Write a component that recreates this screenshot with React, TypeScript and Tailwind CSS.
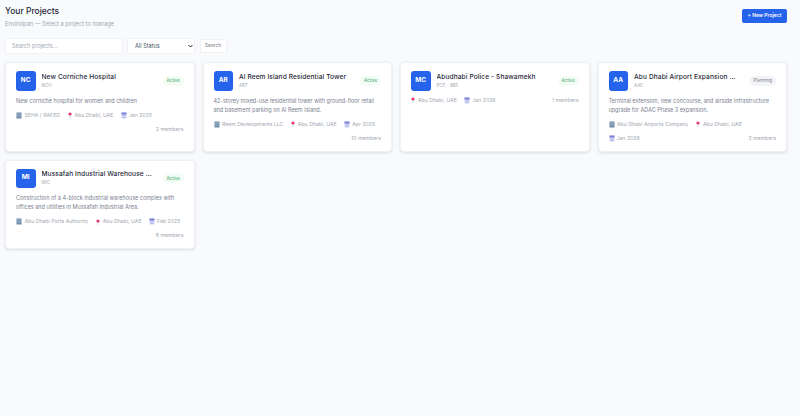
const font = "font-['Inter',sans-serif]";

const BuildingIcon = () => (
  <svg width="6" height="7" viewBox="0 0 12 14" className="shrink-0">
    <rect x="1" y="1" width="10" height="12" fill="#6f8cab" />
    <rect x="3" y="3" width="2" height="2" fill="#c6d9ea" />
    <rect x="7" y="3" width="2" height="2" fill="#c6d9ea" />
    <rect x="3" y="7" width="2" height="2" fill="#c6d9ea" />
    <rect x="7" y="7" width="2" height="2" fill="#c6d9ea" />
  </svg>
);

const PinIcon = () => (
  <svg width="4" height="6" viewBox="0 0 10 14" className="shrink-0">
    <circle cx="5" cy="4.5" r="4" fill="#e8336f" />
    <rect x="4.2" y="7" width="1.6" height="7" fill="#b4bac4" />
  </svg>
);

const CalendarIcon = () => (
  <svg width="6" height="7" viewBox="0 0 12 14" className="shrink-0">
    <rect x="1" y="1" width="10" height="12" fill="#d3d5f3" />
    <rect x="1" y="1" width="10" height="4" fill="#7a80d8" />
    <rect x="3" y="7" width="6" height="1" fill="#9a9fe0" />
    <rect x="3" y="10" width="6" height="1" fill="#9a9fe0" />
  </svg>
);

type Project = {
  initials: string;
  name: string;
  code: string;
  status: string;
  description?: string;
  client?: string;
  date: string;
  members: string;
};

const projects: Project[] = [
  {
    initials: "NC",
    name: "New Corniche Hospital",
    code: "NCH",
    status: "Active",
    description: "New corniche hospital for women and children",
    client: "SEHA / RAFED",
    date: "Jan 2025",
    members: "2 members",
  },
  {
    initials: "AR",
    name: "Al Reem Island Residential Tower",
    code: "ART",
    status: "Active",
    description:
      "42-storey mixed-use residential tower with ground-floor retail and basement parking on Al Reem Island.",
    client: "Reem Developments LLC",
    date: "Apr 2025",
    members: "10 members",
  },
  {
    initials: "MC",
    name: "Abudhabi Police - Shawamekh",
    code: "PCE - 885",
    status: "Active",
    date: "Jan 2026",
    members: "1 members",
  },
  {
    initials: "AA",
    name: "Abu Dhabi Airport Expansion Phase 3",
    code: "AAE",
    status: "Planning",
    description:
      "Terminal extension, new concourse, and airside infrastructure upgrade for ADAC Phase 3 expansion.",
    client: "Abu Dhabi Airports Company",
    date: "Jan 2026",
    members: "3 members",
  },
  {
    initials: "MI",
    name: "Mussafah Industrial Warehouse Complex",
    code: "MIC",
    status: "Active",
    description:
      "Construction of a 4-block industrial warehouse complex with offices and utilities in Mussafah Industrial Area.",
    client: "Abu Dhabi Ports Authority",
    date: "Feb 2025",
    members: "8 members",
  },
];

const ProjectCard = ({ project }: { project: Project }) => (
  <div className="flex flex-col rounded-[4px] border border-[#f0f1f4] bg-white px-[10px] pt-[8px] pb-[8px] shadow-[0_1px_3px_rgba(0,0,0,0.12)]">
    <div className="flex items-center gap-[6px]">
      <div className="flex h-[19.5px] w-[19.5px] shrink-0 items-center justify-center rounded-[3px] bg-[#2563eb] text-[6.5px] font-bold text-white">
        {project.initials}
      </div>
      <div className="min-w-0 flex-1">
        <div className="truncate text-[6.6px] leading-[10px] font-medium tracking-[0.1px] text-[#1f2937]">
          {project.name}
        </div>
        <div className="text-[4.5px] leading-[8px] text-[#a3a9b3]">{project.code}</div>
      </div>
      <span
        className={
          project.status === "Active"
            ? "ml-[4px] shrink-0 rounded-full bg-[#f3fdf6] px-[3.5px] py-[1.5px] text-[4.6px] leading-[7px] text-[#3aa866]"
            : "ml-[4px] shrink-0 rounded-full bg-[#f3f4f6] px-[4px] py-[1.5px] text-[4.6px] leading-[7px] text-[#7b8290]"
        }
      >
        {project.status}
      </span>
    </div>
    {project.description && (
      <p className="mt-[6px] text-[5.5px] leading-[9px] text-[#7b8290]">{project.description}</p>
    )}
    <div className="mt-[5px] flex flex-wrap items-center gap-x-[7.5px] gap-y-[5px] text-[5.2px] leading-[9px] text-[#a3a9b3]">
      {project.client && (
        <span className="flex items-center gap-[2.5px]">
          <BuildingIcon />
          {project.client}
        </span>
      )}
      <span className="flex items-center gap-[3px]">
        <PinIcon />
        Abu Dhabi, UAE
      </span>
      <span className="flex items-center gap-[2px]">
        <CalendarIcon />
        {project.date}
      </span>
      <span className="ml-auto">{project.members}</span>
    </div>
  </div>
);

export default function App() {
  return (
    <div className={`${font} min-h-[416px] w-[800px] bg-[#f8fafc] pt-[5px] pr-[13px] pl-[5px]`}>
      <div className="flex items-start justify-between">
        <div>
          <h1 className="text-[8.5px] leading-[12px] font-medium text-[#1f2937]">Your Projects</h1>
          <p className="mt-[2px] text-[5.7px] leading-[9px] text-[#a3a9b3]">
            Enviroipan — Select a project to manage
          </p>
        </div>
        <button className="mt-[4px] h-[14px] w-[45px] rounded-[2px] bg-[#2563eb] text-[5px] font-semibold text-white">
          + New Project
        </button>
      </div>

      <div className="mt-[10px] flex items-center gap-[4.5px]">
        <input
          placeholder="Search projects..."
          className="h-[16px] w-[117.5px] rounded-[2px] border border-[#f0f1f4] bg-white px-[6px] text-[5.5px] placeholder:text-[#a3a9b3]"
        />
        <div className="relative">
          <select className="block h-[16px] w-[68px] appearance-none rounded-[2px] border border-[#f0f1f4] bg-white px-[7px] text-[5.6px] text-[#4b5563]">
            <option>All Status</option>
          </select>
          <svg width="5" height="4" viewBox="0 0 10 8" className="absolute top-[6px] right-[2px]">
            <path d="M1 2 L5 6 L9 2" fill="none" stroke="#1f2937" strokeWidth="2" />
          </svg>
        </div>
        <button className="h-[14px] w-[27px] rounded-[2px] border border-[#f0f1f4] bg-white text-[5px] text-[#7b8290]">
          Search
        </button>
      </div>

      <div className="mt-[8px] grid grid-cols-4 items-stretch gap-[8px]">
        {projects.map((project) => (
          <ProjectCard key={project.initials} project={project} />
        ))}
      </div>
    </div>
  );
}
